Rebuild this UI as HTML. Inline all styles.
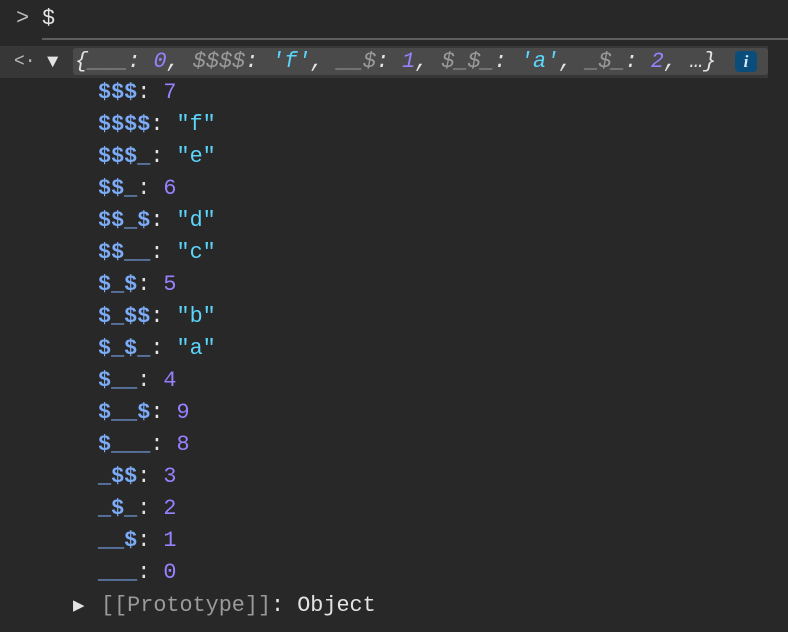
<!DOCTYPE html>
<html><head><style>
body{margin:0;background:#282828;width:788px;height:632px;overflow:hidden;font-family:"Liberation Mono",monospace;font-size:21.8px;color:#e3e3e3;position:relative}
.a{position:absolute;white-space:pre;line-height:32px}
.k{color:#7cacf8;font-weight:bold}.n{color:#9a80ff}.s{color:#5cd5fb}.g{color:#9a9a9a}
</style></head><body>
<div class="a" style="left:16px;top:3px;color:#bbb;font-size:22px">&gt;</div>
<div class="a" style="left:42px;top:3px">$</div>
<div style="position:absolute;left:42px;right:0;top:38px;height:2px;background:#5e5e5e"></div>
<div style="position:absolute;left:0;width:768px;top:46px;height:32px;background:#373737"></div>
<div style="position:absolute;left:73px;width:695px;top:48px;height:27px;background:#4a4a4a;border-radius:3px"></div>
<div class="a" style="left:14px;top:46px;color:#bbb;font-size:18px">&lt;·</div>
<div class="a" style="left:47px;top:46px;font-size:19px">▼</div>
<div class="a" style="left:75px;top:46px;font-style:italic">{<span class="g">___</span>: <span class="n">0</span>, <span class="g">$$$$</span>: <span class="s">'f'</span>, <span class="g">__$</span>: <span class="n">1</span>, <span class="g">$_$_</span>: <span class="s">'a'</span>, <span class="g">_$_</span>: <span class="n">2</span>, …}</div>
<div style="position:absolute;left:735px;top:51px;width:22px;height:21px;background:#0b4d7a;border-radius:4px;color:#d6e8ff;font:italic bold 17px 'Liberation Serif',serif;text-align:center;line-height:21px">i</div>
<div class="a" style="left:98px;top:77px"><span class="k">$$$</span>: <span class="n">7</span>
<span class="k">$$$$</span>: <span class="s">"f"</span>
<span class="k">$$$_</span>: <span class="s">"e"</span>
<span class="k">$$_</span>: <span class="n">6</span>
<span class="k">$$_$</span>: <span class="s">"d"</span>
<span class="k">$$__</span>: <span class="s">"c"</span>
<span class="k">$_$</span>: <span class="n">5</span>
<span class="k">$_$$</span>: <span class="s">"b"</span>
<span class="k">$_$_</span>: <span class="s">"a"</span>
<span class="k">$__</span>: <span class="n">4</span>
<span class="k">$__$</span>: <span class="n">9</span>
<span class="k">$___</span>: <span class="n">8</span>
<span class="k">_$$</span>: <span class="n">3</span>
<span class="k">_$_</span>: <span class="n">2</span>
<span class="k">__$</span>: <span class="n">1</span>
<span class="k">___</span>: <span class="n">0</span></div>
<div class="a" style="left:73px;top:590px;font-size:19px">▶</div>
<div class="a" style="left:101px;top:590px"><span class="g">[[Prototype]]</span>: Object</div>
</body></html>
